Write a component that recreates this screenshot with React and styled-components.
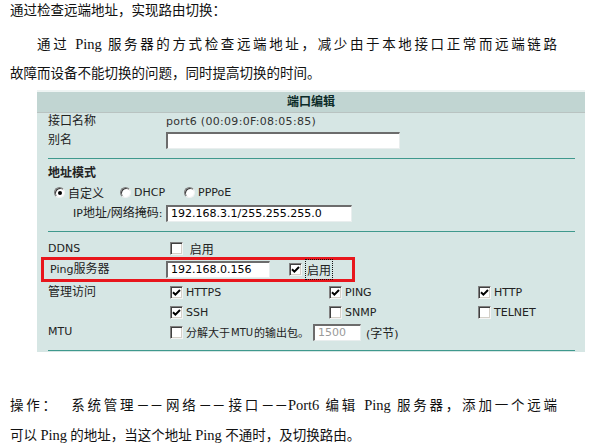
import styled, { createGlobalStyle } from 'styled-components';

const GlobalStyle = createGlobalStyle`
  html, body {
    margin: 0;
    padding: 0;
    background: #fff;
  }
  body {
    width: 610px;
    height: 447px;
    overflow: hidden;
  }
`;

const Page = styled.div`
  padding: 0 10px;
  font-family: 'Liberation Serif', 'Noto Sans CJK SC', serif;
  font-size: 13.5px;
  color: #111;
`;

const Line = styled.div`
  width: 547px;
  height: ${({ h = 30 }) => h}px;
  line-height: ${({ h = 30 }) => h}px;
  text-indent: ${({ indent }) => (indent ? '27px' : '0')};
  text-align: ${({ justify }) => (justify ? 'justify' : 'left')};
  text-align-last: ${({ justify }) => (justify ? 'justify' : 'auto')};
  margin-top: ${({ top = 0 }) => top}px;
`;

const Latin = styled.span`
  font-size: 14.5px;
`;

const Panel = styled.section`
  margin: 3px 0 0 27px;
  width: 548px;
  background: #d6e6e4;
  box-shadow: 0 -2px 0 #eef4f3;
  font-family: 'DejaVu Sans', 'Noto Sans CJK SC', sans-serif;
  font-size: 11px;
  color: #222;
  padding-bottom: 1px;
`;

const Header = styled.div`
  height: 20px;
  line-height: 20px;
  text-align: center;
  background: #c1d5d2;
  border-bottom: 1px solid #b9c3c1;
  font-weight: bold;
  font-size: 12px;
  color: #0c2b28;
`;

const Body = styled.div`
  padding: 0 10px 0 11px;
`;

const Row = styled.div`
  display: flex;
  align-items: ${({ align = 'center' }) => align};
  height: ${({ h = 20 }) => h}px;
  margin-top: ${({ top = 0 }) => top}px;
  padding-left: ${({ indent = 0 }) => indent}px;
`;

const Label = styled.div`
  flex: none;
  width: ${({ w = 118 }) => w}px;
  line-height: 20px;
  font-weight: ${({ bold }) => (bold ? 'bold' : 'normal')};
`;

const Zh = styled.span`
  font-size: ${({ size = 12 }) => size}px;
`;

const Value = styled.span`
  color: #333;
  letter-spacing: 0.3px;
`;

const Field = styled.div`
  box-sizing: border-box;
  width: ${({ w }) => w}px;
  height: 17px;
  margin-left: ${({ left = 0 }) => left}px;
  background: #fff;
  border-style: solid;
  border-width: 2px 1px 1px 2px;
  border-color: #6c6c6c #e9eeee #e9eeee #6c6c6c;
  padding-left: 3px;
  line-height: 14px;
  font-size: 11px;
  color: ${({ muted }) => (muted ? '#9a9a9a' : '#000')};
  white-space: nowrap;
  overflow: hidden;
`;

const Separator = styled.div`
  height: 1px;
  background: #3f998d;
  margin-top: 8px;
`;

const Radios = styled.div`
  display: flex;
  align-items: center;
  padding-left: 6px;
`;

const RadioOption = styled.label`
  display: flex;
  align-items: center;
  gap: 3px;
  width: ${({ w }) => (w ? `${w}px` : 'auto')};
`;

const RadioDot = styled.span`
  box-sizing: border-box;
  width: 11px;
  height: 11px;
  border-radius: 50%;
  background: #fff;
  border: 1px solid;
  border-color: #7d7d7d #f2f2f2 #f2f2f2 #7d7d7d;
  box-shadow: inset 1px 1px 0 #3d3d3d;
  display: flex;
  align-items: center;
  justify-content: center;
  &::after {
    content: '';
    width: 4px;
    height: 4px;
    border-radius: 50%;
    background: ${({ on }) => (on ? '#000' : 'transparent')};
  }
`;

const CheckOption = styled.label`
  display: flex;
  align-items: center;
  gap: 1px;
  margin-left: ${({ left = 4 }) => left}px;
  width: ${({ w }) => (w ? `${w}px` : 'auto')};
  white-space: nowrap;
`;

const Box = styled.span`
  flex: none;
  box-sizing: border-box;
  width: 13px;
  height: 13px;
  background: #fff;
  border: 1px solid;
  border-color: #808080 #f4f4f4 #f4f4f4 #808080;
  box-shadow: inset 1px 1px 0 #404040, inset -1px -1px 0 #d4d0c8;
  display: flex;
  align-items: center;
  justify-content: center;
  margin-right: 2px;
`;

const Focus = styled.span`
  outline: 1px dotted #111;
  outline-offset: 1px;
  margin-left: 2px;
`;

const PingBox = styled.div`
  box-sizing: border-box;
  display: flex;
  align-items: center;
  width: 314px;
  height: 25px;
  margin-left: -7px;
  padding-left: 6px;
  border: 3px solid #e8161c;
`;

const Options = styled.div`
  display: grid;
  grid-template-columns: 159px 149px auto;
  grid-auto-rows: 20px;
  align-items: center;
`;

const Small = styled.span`
  font-size: 10px;
`;

const Unit = styled.span`
  margin-left: 5px;
`;

const Check = ({ on }) => (
  <Box>
    {on && (
      <svg width="9" height="9" viewBox="0 0 9 9">
        <path d="M1 4.2 L3.4 6.6 L8 2" fill="none" stroke="#000" strokeWidth="2" />
      </svg>
    )}
  </Box>
);

const access = [
  { name: 'HTTPS', on: true },
  { name: 'PING', on: true },
  { name: 'HTTP', on: true },
  { name: 'SSH', on: true },
  { name: 'SNMP', on: false },
  { name: 'TELNET', on: false },
];

const App = () => (
  <>
    <GlobalStyle />
    <Page>
      <Line h={22}>通过检查远端地址，实现路由切换：</Line>
      <Line top={7} indent justify>
        通过 <Latin>Ping</Latin> 服务器的方式检查远端地址，减少由于本地接口正常而远端链路
      </Line>
      <Line>故障而设备不能切换的问题，同时提高切换的时间。</Line>

      <Panel>
        <Header>端口编辑</Header>
        <Body>
          <Row h={17}>
            <Label><Zh>接口名称</Zh></Label>
            <Value>port6 (00:09:0F:08:05:85)</Value>
          </Row>
          <Row>
            <Label><Zh>别名</Zh></Label>
            <Field w={234} />
          </Row>
          <Separator />
          <Row h={18} top={5}>
            <Label bold><Zh>地址模式</Zh></Label>
          </Row>
          <Row h={21}>
            <Radios>
              <RadioOption w={66}>
                <RadioDot on />
                <Zh>自定义</Zh>
              </RadioOption>
              <RadioOption w={64}>
                <RadioDot />
                DHCP
              </RadioOption>
              <RadioOption>
                <RadioDot />
                PPPoE
              </RadioOption>
            </Radios>
          </Row>
          <Row indent={25}>
            <Label w={93}>IP<Zh>地址</Zh>/<Zh>网络掩码</Zh>:</Label>
            <Field w={186}>192.168.3.1/255.255.255.0</Field>
          </Row>
          <Separator />
          <Row h={17} top={8}>
            <Label>DDNS</Label>
            <CheckOption>
              <Check />
              <Zh>&nbsp;启用</Zh>
            </CheckOption>
          </Row>
          <PingBox>
            <Label w={116}>Ping<Zh>服务器</Zh></Label>
            <Field w={104}>192.168.0.156</Field>
            <CheckOption left={19}>
              <Check on />
              <Focus><Zh>启用</Zh></Focus>
            </CheckOption>
          </PingBox>
          <Row h={40} align="flex-start">
            <Label><Zh>管理访问</Zh></Label>
            <Options>
              {access.map(item => (
                <CheckOption key={item.name}>
                  <Check on={item.on} />
                  {item.name}
                </CheckOption>
              ))}
            </Options>
          </Row>
          <Row>
            <Label>MTU</Label>
            <CheckOption w={143}>
              <Check />
              <Zh size={11}>分解大于</Zh>
              <Small>MTU</Small>
              <Zh size={11}>的输出包。</Zh>
            </CheckOption>
            <Field w={48} muted>1500</Field>
            <Unit>(<Zh>字节</Zh>)</Unit>
          </Row>
          <Separator />
        </Body>
      </Panel>

      <Line top={38} justify>
        操作：&nbsp;&nbsp;系统管理－－网络－－接口－－<Latin>Port6</Latin> 编辑 <Latin>Ping</Latin> 服务器，添加一个远端
      </Line>
      <Line>
        可以 <Latin>Ping</Latin> 的地址，当这个地址 <Latin>Ping</Latin> 不通时，及切换路由。
      </Line>
    </Page>
  </>
);

export default App;
